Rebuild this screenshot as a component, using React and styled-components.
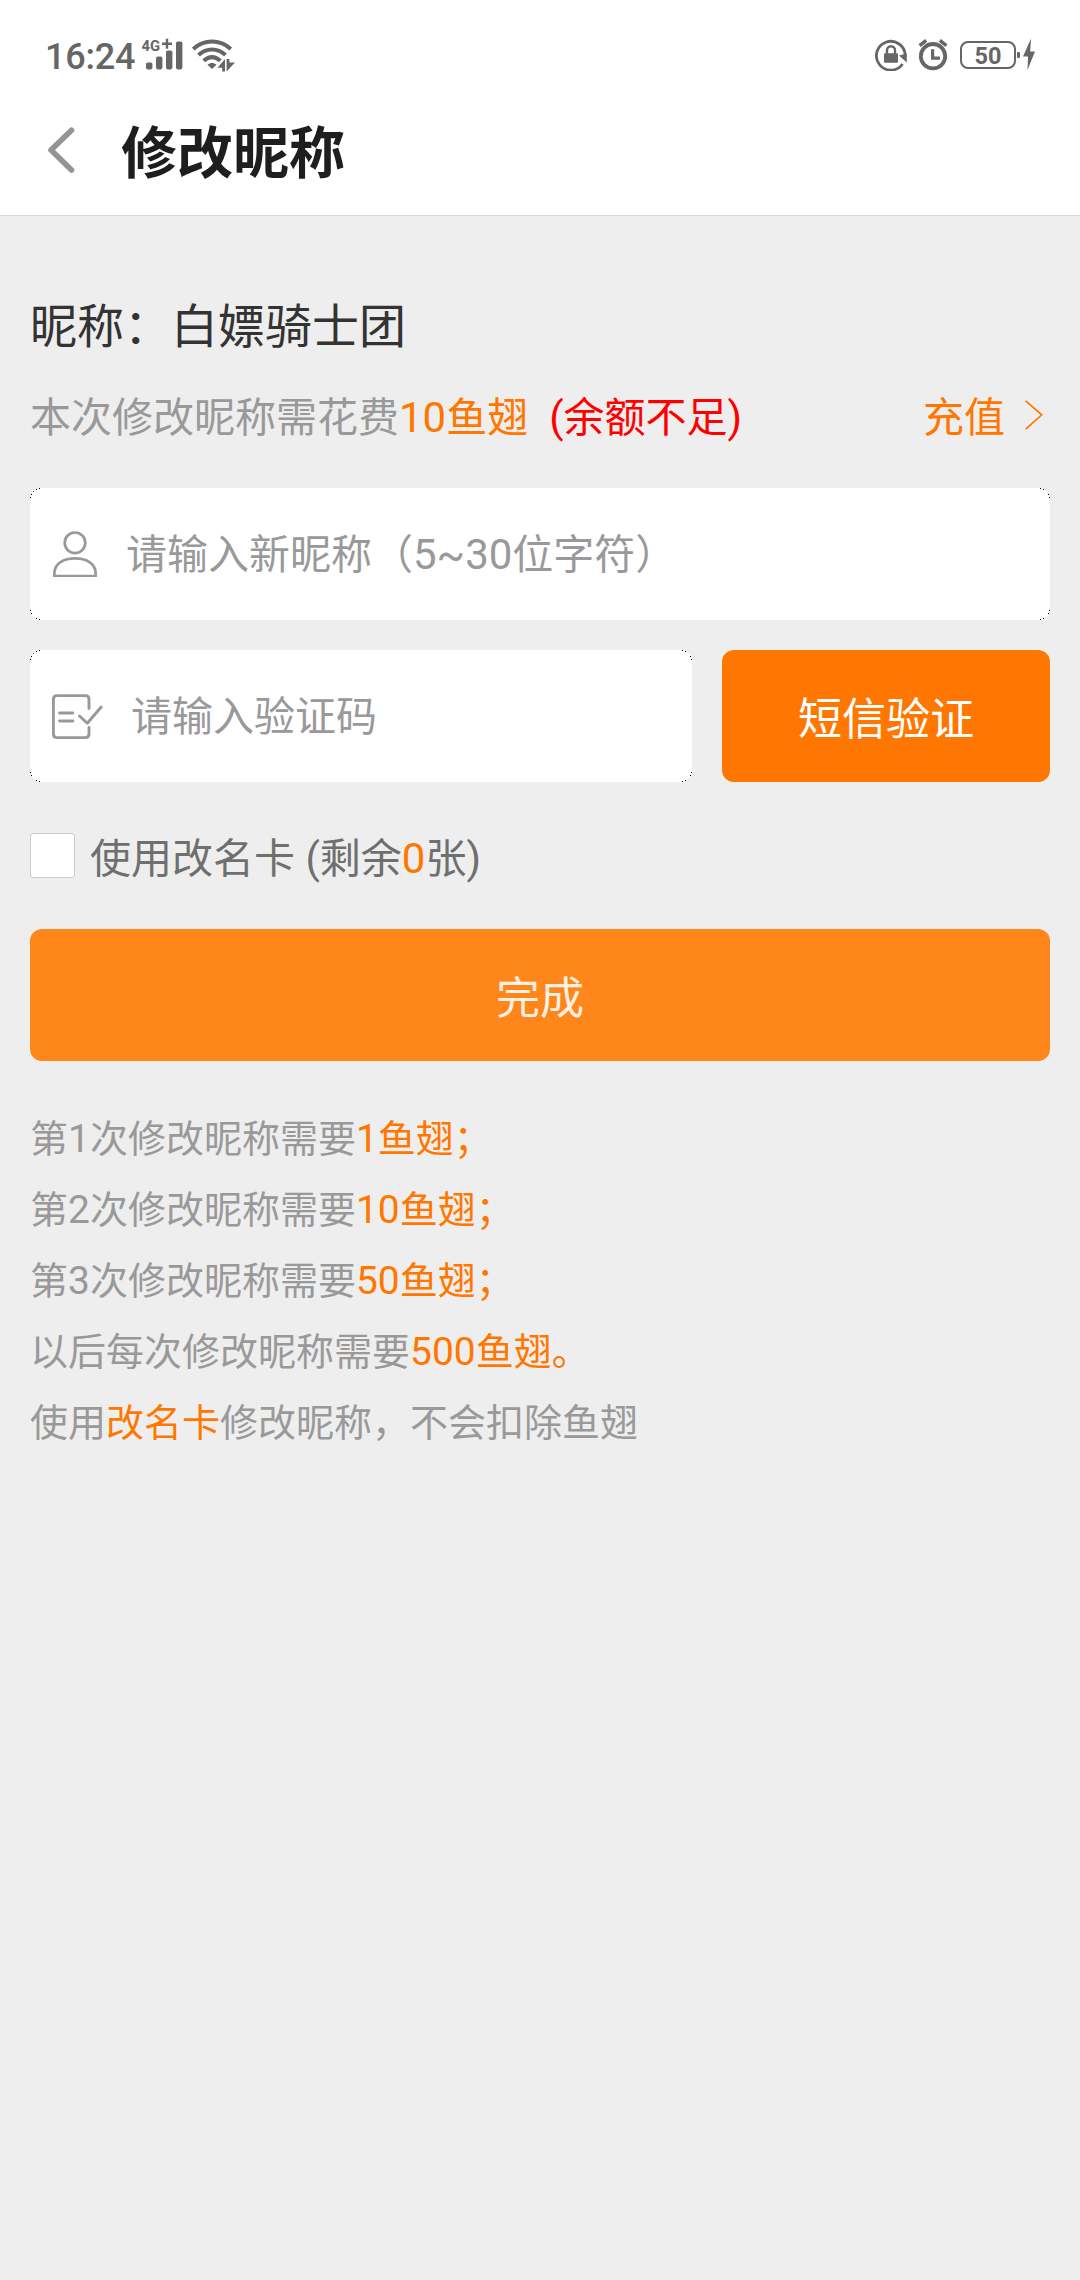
import { useState } from "react";
import styled, { createGlobalStyle } from "styled-components";

const rules = [
    { before: "第", num: "1", after: "次修改昵称需要", costNum: "1", cost: "鱼翅；" },
    { before: "第", num: "2", after: "次修改昵称需要", costNum: "10", cost: "鱼翅；" },
    { before: "第", num: "3", after: "次修改昵称需要", costNum: "50", cost: "鱼翅；" },
    { before: "以后每次修改昵称需要", num: "", after: "", costNum: "500", cost: "鱼翅。" },
];

function StatusBar() {
    return (
        <Status>
            <Time>16:24</Time>
            <SignalIcon viewBox="0 0 42 32">
                <text x="-0.5" y="12.8" fontSize="14.8">4G</text>
                <path d="M20 5.8h10M25 0.8v10" stroke="#666" strokeWidth="2.4" />
                <rect x="4" y="24.4" width="6.4" height="7" rx="1.8" />
                <rect x="14" y="18.4" width="6.4" height="13" rx="1.8" />
                <rect x="24" y="12.4" width="6.4" height="19" rx="1.8" />
                <rect x="34" y="3.4" width="6.4" height="28" rx="1.8" />
            </SignalIcon>
            <WifiIcon viewBox="0 0 44 34">
                <g fill="none" stroke="#666" strokeWidth="4">
                    <path d="M1.2 11C12 1 28 1 38.8 11" />
                    <path d="M6.5 17C14.5 9.6 25.5 9.6 33.5 17" />
                    <path d="M11.7 22.8C17 18 23 18 28.3 22.8" />
                </g>
                <path d="M15.5 26.8C18.3 24.3 21.7 24.3 24.5 26.8L20 31Z" />
                <path d="M25.5 29.8L33 21V33.5H30.2V29.8ZM34.6 33.5V21H37.4V24.4H43Z" stroke="#fff" strokeWidth="1" paintOrder="stroke" />
            </WifiIcon>
            <Grow />
            <LockIcon viewBox="0 0 32 32">
                <path d="M27.6 25A14.4 14.4 0 1 1 30.2 16" fill="none" stroke="#666" strokeWidth="2.8" />
                <path d="M24 16.4L31.8 14.4V23.4Z" />
                <rect x="9" y="14.2" width="14" height="9.6" rx="1" />
                <path d="M12 15V11.2a4 4 0 0 1 8 0V15" fill="none" stroke="#666" strokeWidth="2.4" />
            </LockIcon>
            <AlarmIcon viewBox="0 0 30 34">
                <g fill="none" stroke="#666">
                    <circle cx="15" cy="19.2" r="12.2" strokeWidth="3.8" />
                    <path d="M14.6 12.2V21.2H22" strokeWidth="3.2" />
                    <path d="M1.6 8.6L8.2 3.4M28.4 8.6L21.8 3.4" strokeWidth="3.4" />
                </g>
            </AlarmIcon>
            <Battery>50</Battery>
            <BatteryTip />
            <BoltIcon viewBox="0 0 12 32">
                <path d="M8 0.6L0 18.4H5L4.5 32L12 13.5H7.2Z" />
            </BoltIcon>
        </Status>
    );
}

// 输入框圆角处的小点
function Corners() {
    return (
        <>
            {["tl", "tr", "bl", "br"].map((pos) => (
                <Corner key={pos} $pos={pos} viewBox="0 0 10 10" shapeRendering="crispEdges">
                    <path d="M0 9h1v1h-1zM1 6h1v1h-1zM6 1h1v1h-1zM9 0h1v1h-1z" />
                    {pos === "tl" && <path d="M3 3h1v1h-1z" opacity="0.6" />}
                </Corner>
            ))}
        </>
    );
}

function App() {
    const [checked, setChecked] = useState(false);

    return (
        <>
            <GlobalStyle />
            <StatusBar />
            <Header>
                <BackIcon viewBox="0 0 28 46">
                    <path d="M24.5 3.3L4 23L24.5 43" />
                </BackIcon>
                <Title>修改昵称</Title>
            </Header>
            <Container>
                <Nickname>昵称：白嫖骑士团</Nickname>
                <CostRow>
                    <span>本次修改昵称需花费</span>
                    <Accent><Num>10</Num>鱼翅</Accent>
                    <Warning><Num>(</Num>余额不足<Num>)</Num></Warning>
                    <Grow />
                    <Accent>充值</Accent>
                    <MoreIcon viewBox="0 0 18 30">
                        <path d="M0.7 0.8L16.7 14.8L0.7 29.2" />
                    </MoreIcon>
                </CostRow>
                <InputBox>
                    <Corners />
                    <UserIcon viewBox="0 0 44 46">
                        <circle cx="22" cy="11.8" r="10.3" />
                        <path d="M1.4 45V41C2.4 32 11 27.4 22 27.4S41.6 32 42.6 41V45Z" />
                    </UserIcon>
                    <Placeholder $left="29px">请输入新昵称（<Num>5~30</Num>位字符）</Placeholder>
                </InputBox>
                <CodeRow>
                    <InputBox>
                        <Corners />
                        <CodeIcon viewBox="0 0 52 46">
                            <path d="M37 14.5V5.2Q37 1.6 33.4 1.6H5Q1.4 1.6 1.4 5.2V40Q1.4 43.6 5 43.6H33.4Q37 43.6 37 40V33.5" />
                            <path d="M7.5 19H20.8M7.5 27H20.8M27.5 22L35.3 29.3L49.2 13" />
                        </CodeIcon>
                        <Placeholder $left="27px">请输入验证码</Placeholder>
                    </InputBox>
                    <SmsBtn>短信验证</SmsBtn>
                </CodeRow>
                <CardRow onClick={() => setChecked(!checked)}>
                    <CheckBox $checked={checked} />
                    <CardLabel>使用改名卡<Num> (</Num>剩余<Accent><Num>0</Num></Accent>张<Num>)</Num></CardLabel>
                </CardRow>
                <SubmitBtn>完成</SubmitBtn>
                <Rules>
                    {rules.map((rule) => (
                        <li key={rule.costNum}>
                            {rule.before}<Num>{rule.num}</Num>{rule.after}
                            <Accent><Num>{rule.costNum}</Num>{rule.cost}</Accent>
                        </li>
                    ))}
                    <li>使用<Accent>改名卡</Accent>修改昵称，不会扣除鱼翅</li>
                </Rules>
            </Container>
        </>
    );
}

export default App;

const GlobalStyle = createGlobalStyle`
    * {
        box-sizing: border-box;
    }

    body {
        margin: 0;
        min-height: 2280px;
        background-color: #eee;
        font-family: "Noto Sans CJK SC", sans-serif;
    }
`;

const Status = styled.div`
    display: flex;
    align-items: flex-start;
    height: 90px;
    padding: 38px 45px 0 45px;
    background-color: #fff;
    fill: #666;
`;

const Time = styled.span`
    width: 97px;
    margin-top: -2px;
    font: 500 36px/42px Roboto, sans-serif;
    letter-spacing: -0.2px;
    color: #666;
`;

const SignalIcon = styled.svg`
    width: 42px;
    height: 32px;
    font-family: Roboto, sans-serif;
    font-weight: 700;
`;

const WifiIcon = styled.svg`
    width: 44px;
    height: 34px;
    margin-left: 8px;
`;

const Grow = styled.span`
    flex: 1;
`;

const LockIcon = styled.svg`
    width: 32px;
    height: 32px;
    margin-top: 1px;
`;

const AlarmIcon = styled.svg`
    width: 30px;
    height: 34px;
    margin: -1px 12px 0 11px;
`;

const Battery = styled.span`
    width: 56px;
    height: 28px;
    margin-top: 3px;
    border: 2px solid #666;
    border-radius: 8px;
    font: 700 23.5px/26px Roboto, sans-serif;
    text-align: center;
    color: #666;
`;

const BatteryTip = styled.span`
    width: 3px;
    height: 6px;
    margin: 14px 3px 0 1px;
    border-radius: 1px;
    background-color: #666;
`;

const BoltIcon = styled.svg`
    width: 12px;
    height: 32px;
`;

const Header = styled.header`
    display: flex;
    align-items: center;
    height: 126px;
    padding: 0 0 5px 47px;
    border-bottom: 1px solid #d9d9d9;
    background-color: #fff;
`;

const BackIcon = styled.svg`
    width: 28px;
    height: 46px;
    fill: none;
    stroke: #949494;
    stroke-width: 5.6;
    stroke-linecap: round;
    stroke-linejoin: round;
`;

const Title = styled.h1`
    margin: 0 0 0 46px;
    padding-bottom: 3px;
    font-size: 56px;
    font-weight: 700;
    line-height: 80px;
    color: #1e1e1e;
`;

const Container = styled.main`
    padding: 72px 30px 0;
`;

const Nickname = styled.p`
    margin: 0;
    font-size: 47px;
    line-height: 70px;
    color: #333;
`;

const CostRow = styled.div`
    display: flex;
    align-items: center;
    height: 60px;
    margin: 26px 0 44px;
    padding-right: 7px;
    font-size: 41px;
    line-height: 60px;
    color: #999;
`;

// 数字和半角符号比汉字略大
const Num = styled.span`
    font-family: Roboto, sans-serif;
    font-size: 1.024em;
    line-height: 1;
    white-space: pre;
`;

const Accent = styled.span`
    color: #ff7700;
`;

const Warning = styled.span`
    margin-left: 21px;
    color: #ff0000;
`;

const MoreIcon = styled.svg`
    width: 18px;
    height: 30px;
    margin: 2px 0 0 20px;
    fill: none;
    stroke: #ff7700;
    stroke-width: 1.7;
`;

const InputBox = styled.div`
    position: relative;
    display: flex;
    flex: 1;
    align-items: center;
    height: 132px;
    padding-left: 22px;
    border-radius: 12px;
    background-color: #fff;
`;

const Corner = styled.svg`
    position: absolute;
    width: 10px;
    height: 10px;
    top: ${(props) => (props.$pos[0] === "t" ? "0" : "auto")};
    bottom: ${(props) => (props.$pos[0] === "b" ? "0" : "auto")};
    left: ${(props) => (props.$pos[1] === "l" ? "0" : "auto")};
    right: ${(props) => (props.$pos[1] === "r" ? "0" : "auto")};
    transform: scale(
        ${(props) => (props.$pos[1] === "r" ? -1 : 1)},
        ${(props) => (props.$pos[0] === "b" ? -1 : 1)}
    );
`;

const UserIcon = styled.svg`
    width: 44px;
    height: 46px;
    margin-left: 1px;
    fill: none;
    stroke: #999;
    stroke-width: 2.7;
`;

const CodeIcon = styled.svg`
    width: 52px;
    height: 46px;
    margin-top: 2px;
    fill: none;
    stroke: #999;
    stroke-width: 2.9;
    stroke-linecap: round;
    stroke-linejoin: round;
`;

const Placeholder = styled.span`
    margin-left: ${(props) => props.$left};
    padding-bottom: 6px;
    font-size: 41px;
    line-height: 60px;
    color: #999;
`;

const CodeRow = styled.div`
    display: flex;
    gap: 30px;
    margin-top: 30px;
`;

const Button = styled.button`
    height: 132px;
    padding: 0;
    border: none;
    border-radius: 12px;
    background-color: #ff7700;
    font-family: inherit;
    font-size: 44px;
    color: #fff;
`;

const SmsBtn = styled(Button)`
    width: 328px;
`;

const CardRow = styled.div`
    display: flex;
    align-items: center;
    height: 60px;
    margin: 43px 0 44px;
    font-size: 41px;
    line-height: 60px;
    color: #6f6f6f;
`;

const CheckBox = styled.span`
    width: 45px;
    height: 45px;
    margin-right: 15px;
    border: 1.5px solid #ccc;
    border-radius: 3px;
    background-color: ${(props) => (props.$checked ? "#ff7700" : "#fff")};
`;

const CardLabel = styled.span`
    padding-bottom: 1px;
`;

const SubmitBtn = styled(Button)`
    display: block;
    width: 100%;
    background-color: #ff861b;
    color: #fff0e4;
`;

const Rules = styled.ul`
    margin: 0;
    padding: 39px 0 0;
    list-style: none;
    font-size: 38px;
    line-height: 71px;
    color: #999;
`;
